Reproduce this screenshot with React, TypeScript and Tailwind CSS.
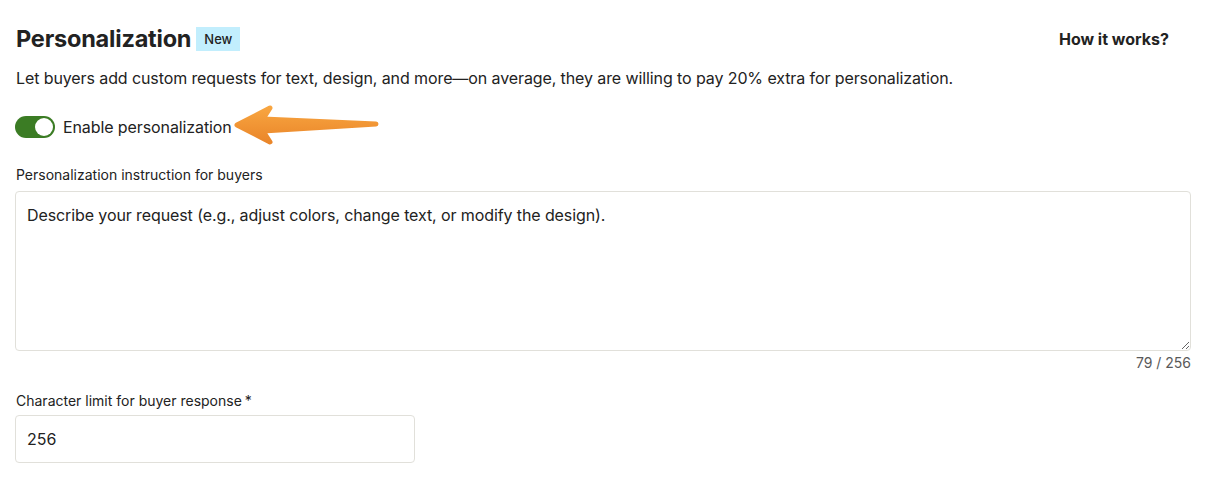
import React, { useState } from "react";

const Arrow = () => (
  <svg width="150" height="46" viewBox="0 0 150 46" className="block">
    <defs>
      <linearGradient id="arrowFill" x1="0" y1="0" x2="0" y2="1">
        <stop offset="0" stopColor="#f8a540" />
        <stop offset="1" stopColor="#ea862a" />
      </linearGradient>
    </defs>
    <path
      d="M4 22 L37 5 L30 16 L143 21 L30 28 L37 39 Z"
      fill="url(#arrowFill)"
      stroke="url(#arrowFill)"
      strokeWidth="5"
      strokeLinejoin="round"
    />
  </svg>
);

export default function App() {
  const [enabled, setEnabled] = useState(true);
  const [instruction, setInstruction] = useState(
    "Describe your request (e.g., adjust colors, change text, or modify the design)."
  );
  const [limit, setLimit] = useState("256");

  return (
    <div
      className="w-[1209px] h-[498px] bg-white text-[#222] px-[15px] pt-[26px]"
      style={{ fontFamily: "Inter, 'Noto Sans', sans-serif" }}
    >
      {/* Header */}
      <div className="flex items-center justify-between h-[26px]">
        <div className="flex items-center gap-[5px] pl-px">
          <h1 className="text-[23.5px] font-bold leading-[26px] tracking-[-0.2px]">
            Personalization
          </h1>
          <span className="bg-[#c2eefd] text-[13px] font-medium leading-[24px] px-[8px]">
            New
          </span>
        </div>
        <button className="text-[16px] font-bold mr-[25px] leading-[26px]">How it works?</button>
      </div>

      <p className="mt-[15px] pl-px text-[16px] leading-[22px] tracking-[-0.1px]">
        Let buyers add custom requests for text, design, and more—on average, they are
        willing to pay 20% extra for personalization.
      </p>

      {/* Toggle */}
      <div className="mt-[15px] flex items-center h-[46px]">
        <button
          onClick={() => setEnabled(!enabled)}
          className={
            enabled
              ? "w-[40px] h-[22px] rounded-full bg-[#3b7c24] flex items-center justify-end px-[2px]"
              : "w-[40px] h-[22px] rounded-full bg-[#bbb] flex items-center justify-start px-[2px]"
          }
        >
          <span className="w-[18px] h-[18px] rounded-full bg-white" />
        </button>
        <span className="ml-[8px] text-[16px] tracking-[-0.1px]">Enable personalization</span>
        <div className="ml-[1px] -mt-[2px]">
          <Arrow />
        </div>
      </div>

      {/* Instruction */}
      <label className="block mt-[15px] text-[14px] leading-[20px] pl-px">
        Personalization instruction for buyers
      </label>
      <textarea
        value={instruction}
        onChange={(e) => setInstruction(e.target.value)}
        className="mt-[6px] block w-[1176px] h-[160px] border border-[#e1e0da] rounded-[4px] px-[11px] pt-[12px] pb-[11px] text-[16px] leading-[22px] tracking-[-0.1px] outline-none resize-y"
      />
      <div className="w-[1176px] text-right text-[14px] text-[#595959] leading-[20px] mt-[2px]">
        {instruction.length} / 256
      </div>

      {/* Character limit */}
      <label className="block mt-[18px] text-[14px] leading-[20px] pl-px">
        Character limit for buyer response<span className="ml-[3px]">*</span>
      </label>
      <input
        value={limit}
        onChange={(e) => setLimit(e.target.value)}
        className="mt-[4px] block w-[400px] h-[48px] border border-[#e1e0da] rounded-[4px] px-[11px] text-[16px] outline-none"
      />
    </div>
  );
}
